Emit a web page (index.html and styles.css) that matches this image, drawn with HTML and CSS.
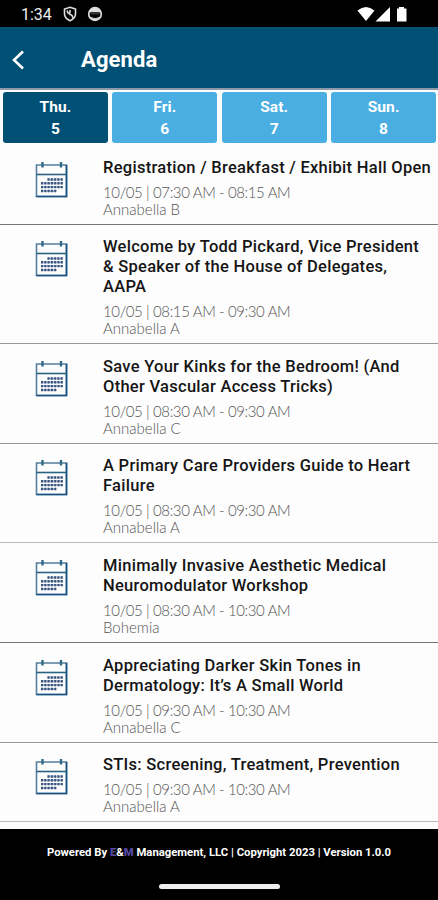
FILE: index.html
```html
<!DOCTYPE html>
<html lang="en">
<head>
  <meta charset="UTF-8" />
  <meta name="viewport" content="width=device-width, initial-scale=1.0"/>
  <title>Agenda</title>
  <link rel="stylesheet" href="styles.css">
</head>
<body>
  <svg class="sprite" width="0" height="0">
    <symbol id="calendar" viewBox="0 0 34 37">
      <path d="M2.500 4H32.500V35.500H2.500Z" fill="none" stroke="#557f9d" stroke-width="1.6"/>
      <path d="M32.500 4V35.500H2.500" fill="none" stroke="#174f80" stroke-width="1.6"/>
      <path d="M2.500 13.500H32.500" stroke="#286384" stroke-width="1.6"/>
      <path d="M8.500 1V6.500M27 1V6.500" stroke="#316c88" stroke-width="2.4"/>
      <path d="M13.500 18.500H29M7 22.300H29M7 26.100H29M7 30H22.500" stroke="#a9b7ce" stroke-width="2"/>
      <path d="M13.500 18.500H29M7 22.300H29M7 26.100H29M7 30H22.500" stroke="#39547f" stroke-width="2.4" stroke-dasharray="2 1.300"/>
    </symbol>
  </svg>

  <div class="status-bar">
    <span class="clock">1:34</span>
    <svg class="shield" width="14" height="16" viewBox="0 0 14 16" fill="none" stroke="#ddd">
      <path d="M7 1.300L12.500 3V8C12.500 11.500 9.500 13.500 7 14.700C4.500 13.500 1.500 11.500 1.500 8V3Z" stroke-width="1.600"/>
      <path d="M4 4.500L5 7L9 9.500L10 12M7 4V7" stroke-width="1.600"/>
    </svg>
    <svg class="face" width="16" height="16" viewBox="0 0 16 16">
      <circle cx="8" cy="8" r="6.300" fill="none" stroke="#ddd" stroke-width="1.700"/>
      <path d="M2 6.500C3 0 13 0 14 6.500Z" fill="#ddd"/>
      <path d="M3.500 6H12.500V8.500H3.500Z" fill="#333"/>
      <path d="M3.500 11.500Q8 14 12.500 11.500L10 14H6Z" fill="#ddd" stroke="#ddd" stroke-width="1"/>
    </svg>
    <svg class="signals" width="52" height="16" viewBox="0 0 52 16" fill="#fff">
      <path d="M0.500 4.500Q9 -2.500 17.500 4.500L9 15Z"/>
      <path d="M33 1V15.500H18.500Z"/>
      <path d="M40 2.500H42V1H47V2.500H49.500V15.500H40Z"/>
    </svg>
  </div>

  <div class="header">
    <svg class="back" width="14" height="20" viewBox="0 0 14 20" fill="none" stroke="#fff" stroke-width="2.600">
      <path d="M12 1.500L3 10L12 18.500"/>
    </svg>
    <h1>Agenda</h1>
  </div>

  <div class="days">
    <div class="day active"><span>Thu.</span><span>5</span></div>
    <div class="day"><span>Fri.</span><span>6</span></div>
    <div class="day"><span>Sat.</span><span>7</span></div>
    <div class="day"><span>Sun.</span><span>8</span></div>
  </div>

  <div class="list">
    <div class="item dark">
      <svg class="icon"><use href="#calendar"/></svg>
      <div class="info">
        <h2>Registration / Breakfast / Exhibit Hall Open</h2>
        <p class="time">10/05 | 07:30 AM - 08:15 AM</p>
        <p>Annabella B</p>
      </div>
    </div>
    <div class="item">
      <svg class="icon"><use href="#calendar"/></svg>
      <div class="info">
        <h2>Welcome by Todd Pickard, Vice President<br>&amp; Speaker of the House of Delegates,<br>AAPA</h2>
        <p class="time">10/05 | 08:15 AM - 09:30 AM</p>
        <p>Annabella A</p>
      </div>
    </div>
    <div class="item">
      <svg class="icon"><use href="#calendar"/></svg>
      <div class="info">
        <h2>Save Your Kinks for the Bedroom! (And<br>Other Vascular Access Tricks)</h2>
        <p class="time">10/05 | 08:30 AM - 09:30 AM</p>
        <p>Annabella C</p>
      </div>
    </div>
    <div class="item light">
      <svg class="icon"><use href="#calendar"/></svg>
      <div class="info">
        <h2>A Primary Care Providers Guide to Heart<br>Failure</h2>
        <p class="time">10/05 | 08:30 AM - 09:30 AM</p>
        <p>Annabella A</p>
      </div>
    </div>
    <div class="item dark">
      <svg class="icon"><use href="#calendar"/></svg>
      <div class="info">
        <h2>Minimally Invasive Aesthetic Medical<br>Neuromodulator Workshop</h2>
        <p class="time">10/05 | 08:30 AM - 10:30 AM</p>
        <p>Bohemia</p>
      </div>
    </div>
    <div class="item">
      <svg class="icon"><use href="#calendar"/></svg>
      <div class="info">
        <h2>Appreciating Darker Skin Tones in<br>Dermatology: It’s A Small World</h2>
        <p class="time">10/05 | 09:30 AM - 10:30 AM</p>
        <p>Annabella C</p>
      </div>
    </div>
    <div class="item light">
      <svg class="icon"><use href="#calendar"/></svg>
      <div class="info">
        <h2>STIs: Screening, Treatment, Prevention</h2>
        <p class="time">10/05 | 09:30 AM - 10:30 AM</p>
        <p>Annabella A</p>
      </div>
    </div>
  </div>

  <div class="footer">
    <div class="credit">Powered By <b>E</b>&amp;<b>M</b> Management, LLC | Copyright 2023 | Version 1.0.0</div>
    <div class="home-bar"></div>
  </div>
</body>
</html>
```
FILE: styles.css
```css
* {
  box-sizing: border-box;
}

body {
  margin: 0;
  height: 900px;
  display: flex;
  flex-direction: column;
  overflow: hidden;
  background: #fdfdfd;
  font-family: Roboto, sans-serif;
}

.sprite {
  display: block;
  flex: none;
}

.status-bar {
  height: 27px;
  flex: none;
  display: flex;
  align-items: center;
  padding: 1px 29px 0 21px;
  background: #000;
  color: #eee;
}

.clock {
  width: 42px;
  font-size: 16px;
}

.face {
  margin-left: 10px;
}

.signals {
  margin-left: auto;
}

.header {
  height: 63px;
  flex: none;
  display: flex;
  align-items: center;
  padding: 4px 0 0 11px;
  background: #005075;
  border-bottom: 2px solid #8d99a9;
  color: #fff;
}

.header h1 {
  margin: 0 0 0 56px;
  font-size: 22px;
  font-weight: 700;
  letter-spacing: 0.1px;
}

.days {
  height: 55px;
  flex: none;
  display: grid;
  grid-template-columns: repeat(4, 1fr);
  gap: 4.6px;
  padding: 2px 2px 2px 3px;
}

.day {
  display: flex;
  flex-direction: column;
  align-items: center;
  padding-top: 4px;
  border-radius: 3px;
  background: #4aaee2;
  color: #fff;
  font-size: 15.5px;
  font-weight: 700;
  line-height: 22.3px;
  letter-spacing: 0.1px;
}

.day.active {
  background: #005075;
}

.list {
  flex: 1;
}

.item {
  display: flex;
  padding: 12.6px 0 6px 34px;
  border-bottom: 1px solid #999;
}

.item.dark {
  border-color: #777;
}

.item.light {
  border-color: #bbb;
}

.icon {
  width: 34px;
  height: 37px;
  flex: none;
  margin: 3px 35px 0 0;
}

.info h2 {
  margin: 0 0 6px;
  font-size: 16.5px;
  font-weight: 500;
  line-height: 20px;
  letter-spacing: 0.28px;
  white-space: nowrap;
  color: #151515;
}

.info p {
  margin: 0;
  font-family: Lato, sans-serif;
  font-size: 15px;
  font-weight: 300;
  line-height: 17px;
  color: #555;
}

.info .time {
  letter-spacing: -0.38px;
}

.footer {
  height: 71px;
  flex: none;
  display: flex;
  flex-direction: column;
  align-items: center;
  background: #000;
}

.credit {
  margin-top: 17px;
  color: #fff;
  font-size: 11.3px;
  font-weight: 700;
  line-height: 14px;
  white-space: nowrap;
}

.credit b {
  color: #55489f;
}

.home-bar {
  width: 121px;
  height: 5px;
  margin-top: 24px;
  border-radius: 3px;
  background: #eee;
}
```
